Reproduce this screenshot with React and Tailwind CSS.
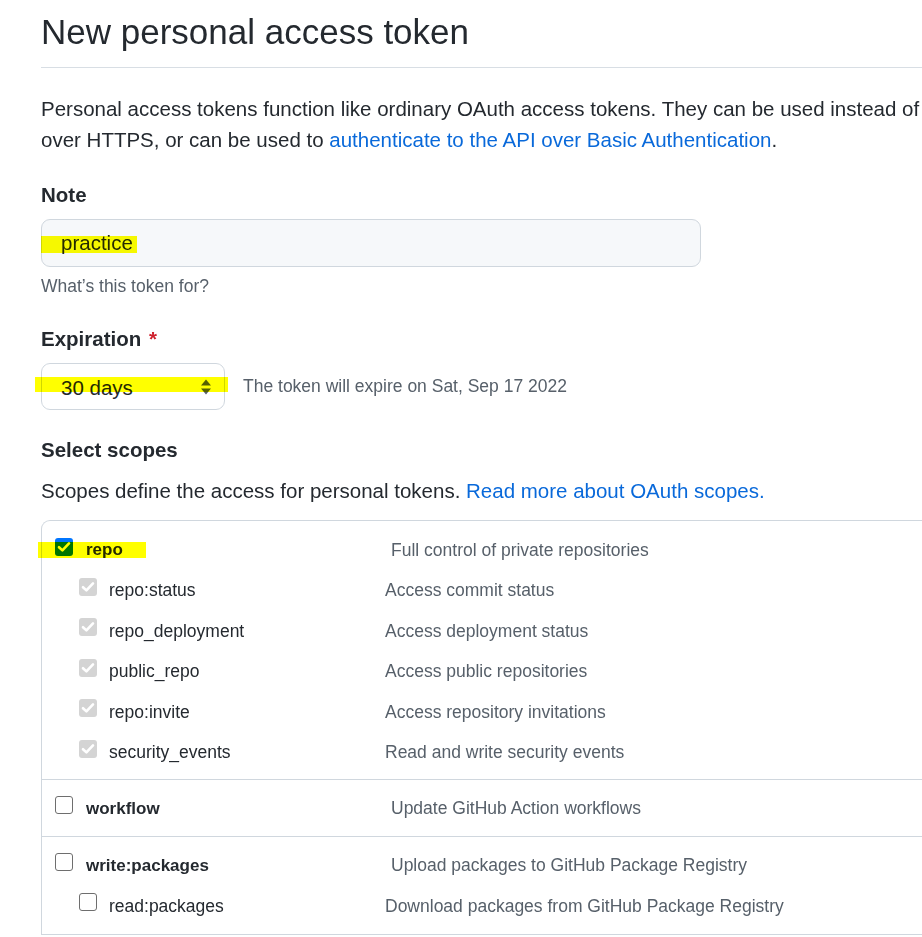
const font = { fontFamily: '"Liberation Sans", Arial, sans-serif' };

function Check({ state }) {
  // state: "on" | "off" | "disabled"
  if (state === "off") {
    return (
      <span className="block h-[18px] w-[18px] shrink-0 rounded-[3px] border-[1.5px] border-[#6e6e6e] bg-white" />
    );
  }
  return (
    <span
      className={
        "flex h-[18px] w-[18px] shrink-0 items-center justify-center rounded-[3px] " +
        (state === "on" ? "bg-[#0075ff]" : "bg-[#d4d4d4]")
      }
    >
      <svg viewBox="0 0 18 18" className="h-[18px] w-[18px]">
        <path
          d="M4 9.2 L7.4 12.4 L14 5.4"
          fill="none"
          stroke="white"
          strokeWidth="2.6"
          strokeLinecap="round"
          strokeLinejoin="round"
        />
      </svg>
    </span>
  );
}

function Mark({ className }) {
  return (
    <span
      className={"pointer-events-none absolute bg-[#ffff00] mix-blend-multiply " + className}
    />
  );
}

function ScopeRow({ name, desc, state, sub, mark }) {
  return (
    <div className="relative flex h-[40.4px] items-center">
      {mark}
      <div
        className={
          "flex items-center " + (sub ? "w-[343px] pl-[37px]" : "w-[349px] pl-[13px]")
        }
      >
        <span className="-mt-[7px]">
          <Check state={state} />
        </span>
        <span
          className={
            sub
              ? "ml-[12px] text-[17.5px] text-[#24292f]"
              : "ml-[13px] text-[17px] font-bold text-[#24292f]"
          }
        >
          {name}
        </span>
      </div>
      <span className="whitespace-nowrap text-[17.5px] text-[#57606a]">{desc}</span>
    </div>
  );
}

export default function App() {
  return (
    <div className="h-[937px] w-[922px] overflow-hidden bg-white" style={font}>
      <div className="w-[1100px] pl-[41px]">
        <div className="border-b border-[#d8dee4] pt-[9px] pb-[13px]">
          <h1 className="text-[35px] leading-[45px] text-[#24292f]">
            New personal access token
          </h1>
        </div>

        <p className="mt-[25px] whitespace-nowrap text-[20.5px] leading-[31px] text-[#24292f]">
          Personal access tokens function like ordinary OAuth access tokens. They can be used
          instead of a password for Git
          <br />
          over HTTPS, or can be used to{" "}
          <a className="text-[#0969da]">authenticate to the API over Basic Authentication</a>.
        </p>

        <div className="mt-[24px] text-[20.5px] font-bold leading-[31px] text-[#24292f]">
          Note
        </div>
        <div className="relative mt-[9px] flex h-[48px] w-[660px] items-center rounded-[9px] border border-[#d0d7de] bg-[#f6f8fa] pl-[19px]">
          <span className="mt-[1px] text-[20.5px] text-[#24292f]">practice</span>
          <Mark className="-left-[1px] top-[16px] h-[17px] w-[96px]" />
        </div>
        <div className="mt-[6px] text-[17.5px] leading-[27px] text-[#57606a]">
          What’s this token for?
        </div>

        <div className="mt-[23px] text-[20.5px] font-bold leading-[31px] text-[#24292f]">
          Expiration <span className="ml-[2px] text-[#cf222e]">*</span>
        </div>
        <div className="mt-[9px] flex items-center">
          <div className="relative flex h-[47px] w-[184px] items-center justify-between rounded-[9px] border border-[#d0d7de] bg-white pl-[19px] pr-[12px]">
            <span className="mt-[3px] text-[20.5px] text-[#24292f]">30 days</span>
            <svg viewBox="0 0 12 18" className="h-[18px] w-[12px]">
              <path d="M6 1.5 L11 7.5 H1 Z" fill="#57606a" />
              <path d="M6 16.5 L11 10.5 H1 Z" fill="#57606a" />
            </svg>
            <Mark className="-left-[7px] top-[13px] h-[15px] w-[193px]" />
          </div>
          <span className="ml-[18px] text-[17.5px] text-[#57606a]">
            The token will expire on Sat, Sep 17 2022
          </span>
        </div>

        <div className="mt-[24px] text-[20.5px] font-bold leading-[31px] text-[#24292f]">
          Select scopes
        </div>
        <p className="mt-[10px] text-[20.5px] leading-[31px] text-[#24292f]">
          Scopes define the access for personal tokens.{" "}
          <a className="text-[#0969da]">Read more about OAuth scopes.</a>
        </p>

        <div className="mt-[14px] rounded-tl-[9px] border-l border-t border-[#d0d7de]">
          <div className="border-b border-[#d0d7de] pt-[9px] pb-[7px]">
            <ScopeRow
              name="repo"
              desc="Full control of private repositories"
              state="on"
              mark={<Mark className="-left-[4px] top-[12px] h-[16px] w-[108px]" />}
            />
            <ScopeRow sub name="repo:status" desc="Access commit status" state="disabled" />
            <ScopeRow
              sub
              name="repo_deployment"
              desc="Access deployment status"
              state="disabled"
            />
            <ScopeRow
              sub
              name="public_repo"
              desc="Access public repositories"
              state="disabled"
            />
            <ScopeRow
              sub
              name="repo:invite"
              desc="Access repository invitations"
              state="disabled"
            />
            <ScopeRow
              sub
              name="security_events"
              desc="Read and write security events"
              state="disabled"
            />
          </div>
          <div className="border-b border-[#d0d7de] pt-[8px] pb-[7.6px]">
            <ScopeRow name="workflow" desc="Update GitHub Action workflows" state="off" />
          </div>
          <div className="border-b border-[#d0d7de] pt-[8px] pb-[8px]">
            <ScopeRow
              name="write:packages"
              desc="Upload packages to GitHub Package Registry"
              state="off"
            />
            <ScopeRow
              sub
              name="read:packages"
              desc="Download packages from GitHub Package Registry"
              state="off"
            />
          </div>
        </div>
      </div>
    </div>
  );
}
